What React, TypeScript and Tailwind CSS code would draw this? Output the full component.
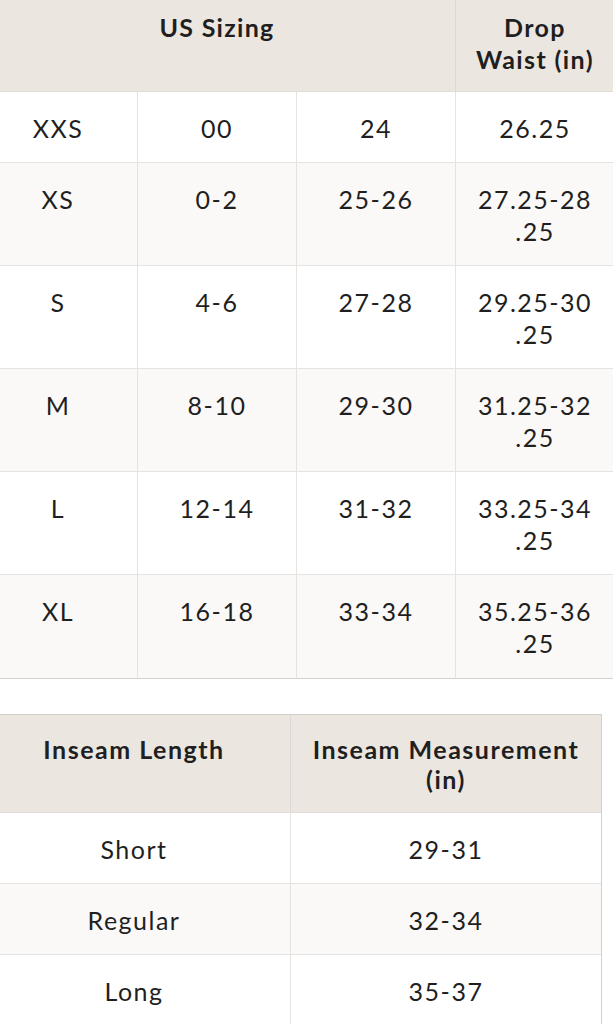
import React from "react";

const rows1: [string, string, string, string[]][] = [
  ["XXS", "00", "24", ["26.25"]],
  ["XS", "0-2", "25-26", ["27.25-28", ".25"]],
  ["S", "4-6", "27-28", ["29.25-30", ".25"]],
  ["M", "8-10", "29-30", ["31.25-32", ".25"]],
  ["L", "12-14", "31-32", ["33.25-34", ".25"]],
  ["XL", "16-18", "33-34", ["35.25-36", ".25"]],
];

const rows2: [string, string][] = [
  ["Short", "29-31"],
  ["Regular", "32-34"],
  ["Long", "35-37"],
];

export default function App() {
  return (
    <div
      className="w-[613px] h-[1024px] overflow-hidden bg-white text-[#1f1f1f]"
      style={{ fontFamily: "Lato, 'Noto Sans', sans-serif" }}
    >
      {/* Table 1 */}
      <div className="-ml-[21px] w-[635px] border-b border-[#d6d2ce]">
        <div className="grid grid-cols-[476px_159px] bg-[#ece6e0] border-b border-[#e2ddd8]">
          <div className="pt-[11px] pb-[16px] text-center text-[25px] leading-[32px] font-bold tracking-[1.3px]">
            US Sizing
          </div>
          <div className="pt-[11px] pb-[16px] text-center text-[25px] leading-[32px] font-bold tracking-[1.4px] border-l border-[#ddd8d3]">
            Drop
            <br />
            Waist (in)
          </div>
        </div>
        {rows1.map((r, i) => (
          <div
            key={i}
            className={`grid grid-cols-[158px_159px_159px_159px] ${
              i % 2 === 1 ? "bg-[#faf9f7]" : "bg-white"
            } ${i < rows1.length - 1 ? "border-b border-[#e6e2df]" : ""}`}
          >
            {[r[0], r[1], r[2]].map((c, j) => (
              <div
                key={j}
                className={`pt-[20px] ${
                  i < rows1.length - 1 ? "pb-[18px]" : "pb-[19px]"
                } text-center text-[25px] leading-[32px] tracking-[1.5px] ${
                  j > 0 ? "border-l border-[#e6e2df]" : ""
                }`}
              >
                {c}
              </div>
            ))}
            <div
              className={`pt-[20px] ${
                i < rows1.length - 1 ? "pb-[18px]" : "pb-[19px]"
              } text-center text-[25px] leading-[32px] tracking-[1.5px] border-l border-[#e6e2df]`}
            >
              {r[3].map((l, k) => (
                <div key={k}>{l}</div>
              ))}
            </div>
          </div>
        ))}
      </div>

      {/* Table 2 */}
      <div className="mt-[35px] -ml-[22px] w-[624px] border-t border-r border-[#d3cfcb]">
        <div className="grid grid-cols-[312px_311px] bg-[#ece6e0] border-b border-[#e2ddd8]">
          <div className="pt-[19px] pb-[18px] text-center text-[25px] leading-[30px] font-bold tracking-[1.5px]">
            Inseam Length
          </div>
          <div className="pt-[19px] pb-[18px] text-center text-[25px] leading-[30px] font-bold tracking-[1.5px] border-l border-[#ddd8d3]">
            Inseam Measurement
            <br />
            (in)
          </div>
        </div>
        {rows2.map((r, i) => (
          <div
            key={i}
            className={`grid grid-cols-[312px_311px] ${
              i % 2 === 1 ? "bg-[#faf9f7]" : "bg-white"
            } border-b border-[#e6e2df]`}
          >
            <div className="pt-[20px] pb-[18px] text-center text-[25px] leading-[32px] tracking-[1.5px]">
              {r[0]}
            </div>
            <div className="pt-[20px] pb-[18px] text-center text-[25px] leading-[32px] tracking-[1.5px] border-l border-[#e6e2df]">
              {r[1]}
            </div>
          </div>
        ))}
      </div>
    </div>
  );
}
